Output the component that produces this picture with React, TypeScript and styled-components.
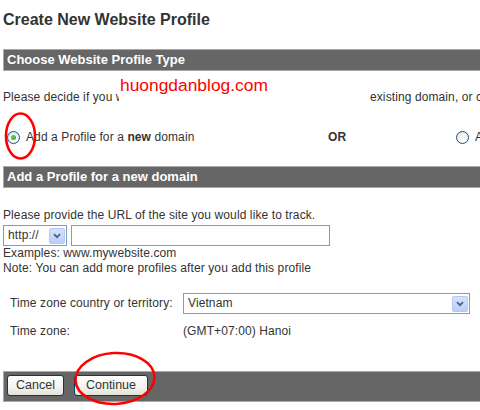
import React from "react";
import styled, { createGlobalStyle } from "styled-components";

const Global = createGlobalStyle`
  html, body { margin: 0; padding: 0; background: #fff; }
  body {
    font-family: "Liberation Sans", Arial, sans-serif;
    font-size: 12px;
    letter-spacing: 0.1px;
    color: #333;
  }
`;

const Page = styled.div`
  position: relative;
  width: 480px;
  height: 410px;
  overflow: hidden;
  padding-left: 3px;
  box-sizing: border-box;
`;

const Title = styled.h1`
  margin: 10px 0 0;
  font-size: 16px;
  line-height: 20px;
  font-weight: bold;
  letter-spacing: 0;
  color: #333;
  white-space: nowrap;
`;

const Bar = styled.div<{ $mt: number }>`
  margin-top: ${(p) => p.$mt}px;
  height: 20px;
  border: 1px solid #a8a8a8;
  border-right: none;
  background: #666;
  color: #fff;
  font-size: 13px;
  font-weight: bold;
  letter-spacing: 0;
  line-height: 20px;
  padding-left: 3px;
  white-space: nowrap;
`;

const Section = styled.div`
  position: relative;
  display: flow-root;
`;

const Desc = styled.div`
  margin-top: 19px;
  display: flex;
  line-height: 15px;
  white-space: nowrap;
`;

const DescStart = styled.span`
  flex: none;
  width: 116px;
  overflow: hidden;
`;

const DescEnd = styled.span`
  margin-left: 251px;
`;

const Watermark = styled.div`
  position: absolute;
  left: 116px;
  top: 4px;
  width: 250px;
  height: 32px;
  box-sizing: border-box;
  padding-left: 1px;
  background: #fff;
  color: #f00;
  font-size: 17.4px;
  letter-spacing: 0;
  line-height: 20px;
`;

const ChoiceRow = styled.div`
  margin-top: 25px;
  display: grid;
  grid-template-columns: 325px 128px auto;
  height: 15px;
  line-height: 15px;
  align-items: center;
  white-space: nowrap;
`;

const Choice = styled.label<{ $indent: number }>`
  display: flex;
  align-items: center;
  gap: 6px;
  padding-left: ${(p) => p.$indent}px;
`;

const Radio = styled.span<{ $checked?: boolean }>`
  position: relative;
  flex: none;
  width: 13px;
  height: 13px;
  box-sizing: border-box;
  border-radius: 50%;
  border: 1px solid #1c5180;
  background: radial-gradient(circle at 65% 65%, #ffffff 0%, #f4f4f0 45%, #dcdad0 100%);
  &::after {
    content: "";
    display: ${(p) => (p.$checked ? "block" : "none")};
    position: absolute;
    left: 3px;
    top: 3px;
    width: 5px;
    height: 5px;
    border-radius: 50%;
    background: radial-gradient(circle at 40% 40%, #5fd35f, #21a121);
  }
`;

const Or = styled.span`
  font-weight: bold;
`;

const Line = styled.div<{ $mt?: number }>`
  margin-top: ${(p) => p.$mt ?? 0}px;
  line-height: 15px;
  white-space: nowrap;
`;

const UrlRow = styled.div`
  margin-top: 2px;
  display: flex;
  gap: 4px;
  height: 21px;
`;

const SelectBox = styled.div<{ $w: number }>`
  width: ${(p) => p.$w}px;
  height: 21px;
  box-sizing: border-box;
  border: 1px solid #7f9db9;
  background: #fff;
  display: flex;
  align-items: center;
  padding-left: 4px;
  white-space: nowrap;
`;

const SelectText = styled.span`
  flex: 1;
  line-height: 15px;
`;

const Arrow = styled.span`
  flex: none;
  width: 16px;
  height: 16px;
  margin-right: 1px;
  box-sizing: border-box;
  border: 1px solid #b4c8f5;
  border-radius: 2px;
  background: linear-gradient(#d5e1fd, #bccefa);
  display: flex;
  align-items: center;
  justify-content: center;
`;

const TextInput = styled.div`
  width: 259px;
  height: 21px;
  box-sizing: border-box;
  border: 1px solid #7f9db9;
  background: #fff;
`;

const TzGrid = styled.div`
  margin-top: 17px;
  display: grid;
  grid-template-columns: 173px 287px;
  grid-template-rows: 21px 15px;
  row-gap: 10px;
  padding-left: 7px;
  align-items: center;
  line-height: 15px;
  white-space: nowrap;
`;

const Footer = styled.div`
  margin-top: 32px;
  height: 26px;
  border: 1px solid #a8a8a8;
  border-right: none;
  background: #666;
  display: flex;
  gap: 10px;
  padding: 3px 0 0 3px;
`;

const Button = styled.button<{ $w: number }>`
  width: ${(p) => p.$w}px;
  height: 21px;
  padding: 0;
  border: 1px solid #003c74;
  border-radius: 3px;
  background: linear-gradient(#ffffff, #f3f2ee 60%, #e3e0d6);
  font-family: "Liberation Sans", Arial, sans-serif;
  font-size: 12.5px;
  color: #333;
  line-height: 19px;
  cursor: pointer;
`;

const Marks = styled.svg`
  position: absolute;
  left: 0;
  top: 0;
  pointer-events: none;
`;

const Chevron = () => (
  <svg width="8" height="6" viewBox="0 0 8 6">
    <path d="M1 1.2 L4 4.2 L7 1.2" fill="none" stroke="#4d6185" strokeWidth="1.8" />
  </svg>
);

export default function App() {
  return (
    <>
      <Global />
      <Page>
        <Title>Create New Website Profile</Title>
        <Bar $mt={19}>Choose Website Profile Type</Bar>
        <Section>
          <Desc>
            <DescStart>Please decide if you want</DescStart>
            <DescEnd>existing domain, or create</DescEnd>
          </Desc>
          <Watermark>huongdanblog.com</Watermark>
          <ChoiceRow>
            <Choice $indent={4}>
              <Radio $checked />
              <span>
                Add a Profile for a <b>new</b> domain
              </span>
            </Choice>
            <Or>OR</Or>
            <Choice $indent={0}>
              <Radio />
              <span>Add a Profile for an existing domain</span>
            </Choice>
          </ChoiceRow>
        </Section>
        <Bar $mt={21}>Add a Profile for a new domain</Bar>
        <Line $mt={20}>Please provide the URL of the site you would like to track.</Line>
        <UrlRow>
          <SelectBox $w={64}>
            <SelectText>http://</SelectText>
            <Arrow>
              <Chevron />
            </Arrow>
          </SelectBox>
          <TextInput />
        </UrlRow>
        <Line>Examples: www.mywebsite.com</Line>
        <Line>Note: You can add more profiles after you add this profile</Line>
        <TzGrid>
          <span>Time zone country or territory:</span>
          <SelectBox $w={287}>
            <SelectText>Vietnam</SelectText>
            <Arrow>
              <Chevron />
            </Arrow>
          </SelectBox>
          <span>Time zone:</span>
          <span>(GMT+07:00) Hanoi</span>
        </TzGrid>
        <Footer>
          <Button $w={57}>Cancel</Button>
          <Button $w={74}>Continue</Button>
        </Footer>
        <Marks width="480" height="410" viewBox="0 0 480 410">
          <ellipse cx="20.5" cy="136" rx="14.5" ry="22.5" fill="none" stroke="#f00" strokeWidth="2.6" />
          <ellipse cx="115" cy="378.5" rx="39.5" ry="25.5" fill="none" stroke="#f00" strokeWidth="2.6" transform="rotate(-3 115 378.5)" />
        </Marks>
      </Page>
    </>
  );
}
